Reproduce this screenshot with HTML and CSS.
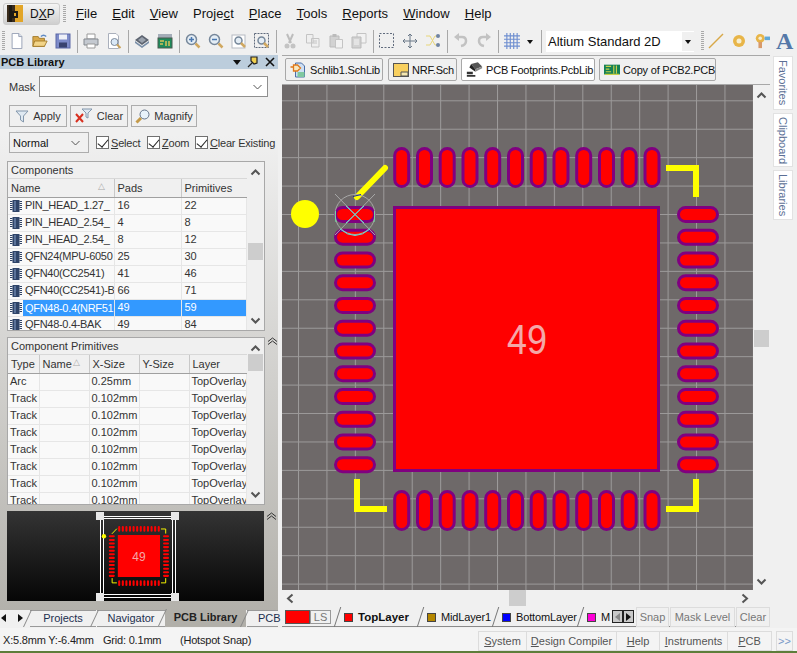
FILE: index.html
```html
<!DOCTYPE html>
<html lang="en">
<head>
    <meta charset="UTF-8">
    <meta name="viewport" content="width=device-width, initial-scale=1.0">
    <title>Altium Designer - PCB Library</title>
    <link rel="stylesheet" href="styles.css">
</head>
<body>
    <!-- shared shapes -->
    <svg class="defs" width="0" height="0">
        <defs>
            <symbol id="chev-up" viewBox="0 0 11 8"><path d="M1.5 6.5 5.5 2.5 9.5 6.5" fill="none" stroke="#555" stroke-width="2"/></symbol>
            <symbol id="chev-down" viewBox="0 0 11 8"><path d="M1.5 1.5 5.5 5.5 9.5 1.5" fill="none" stroke="#555" stroke-width="2"/></symbol>
            <symbol id="chev-fold" viewBox="0 0 11 8"><path d="M1 4.5 5.5 1 10 4.5M1 7.500 5.500 4 10 7.500" fill="none" stroke="#333" stroke-width="1"/></symbol>
            <symbol id="chip" viewBox="0 0 12 12"><rect x="2.500" y="0" width="7" height="12" fill="#2f4468"/><path d="M0 1.500H12M0 3.500H12M0 5.500H12M0 7.500H12M0 9.500H12" stroke="#2f4468" stroke-dasharray="2.500 7 2.500" stroke-width="1"/><rect x="4" y="1" width="2" height="10" fill="#5a7299"/></symbol>
            <path id="pads" fill="none" stroke-linecap="round" d="M401.700 155.500V179.500M424.500 155.500V179.500M447.200 155.500V179.500M470 155.500V179.500M492.700 155.500V179.500M515.500 155.500V179.500M538.200 155.500V179.500M561 155.500V179.500M583.700 155.500V179.500M606.500 155.500V179.500M629.200 155.500V179.500M652 155.500V179.500
                M401.700 498.500V522.500M424.500 498.500V522.500M447.200 498.500V522.500M470 498.500V522.500M492.700 498.500V522.500M515.500 498.500V522.500M538.200 498.500V522.500M561 498.500V522.500M583.700 498.500V522.500M606.500 498.500V522.500M629.200 498.500V522.500M652 498.500V522.500
                M342.500 214.500H367.500M342.500 237.200H367.500M342.500 260H367.500M342.500 282.700H367.500M342.500 305.500H367.500M342.500 328.200H367.500M342.500 351H367.500M342.500 373.700H367.500M342.500 396.500H367.500M342.500 419.200H367.500M342.500 442H367.500M342.500 464.700H367.500
                M685.500 214.500H710.500M685.500 237.200H710.500M685.500 260H710.500M685.500 282.700H710.500M685.500 305.500H710.500M685.500 328.200H710.500M685.500 351H710.500M685.500 373.700H710.500M685.500 396.500H710.500M685.500 419.200H710.500M685.500 442H710.500M685.500 464.700H710.500"/>
            <g id="overlay" fill="none" stroke="#ffff00" stroke-width="6">
                <path d="M357 197 385 168" stroke-linecap="round"/>
                <path d="M666 168H696V197"/>
                <path d="M357 479V509H387"/>
                <path d="M666 509H696V479"/>
                <circle cx="305" cy="214" r="14" fill="#ffff00" stroke="none"/>
            </g>
            <pattern id="grid" x="298" y="100.300" width="28.430" height="28.430" patternUnits="userSpaceOnUse">
                <path d="M.5 0V28.430M0 .5H28.430" stroke="#9c9a9a" stroke-width="1" fill="none"/>
            </pattern>
        </defs>
    </svg>

    <header class="menubar">
        <button class="dxp">
            <svg width="16" height="17" viewBox="0 0 16 17"><rect width="8" height="17" fill="#3a2c1c"/><rect x="8" width="8" height="17" fill="#e2a528"/><path d="M5 0V17H2V0ZM5 6H11V13H5Z" fill="#1e1a14"/><rect x="7" y="8" width="2" height="3" fill="#e2a528"/></svg>
            <span>D<u>X</u>P</span>
        </button>
        <span class="grip"></span>
        <nav class="menu">
            <a><u>F</u>ile</a>
            <a><u>E</u>dit</a>
            <a><u>V</u>iew</a>
            <a>Proje<u>c</u>t</a>
            <a><u>P</u>lace</a>
            <a><u>T</u>ools</a>
            <a><u>R</u>eports</a>
            <a><u>W</u>indow</a>
            <a><u>H</u>elp</a>
        </nav>
    </header>

    <div class="toolbar">
        <span class="grip short"></span>
        <span class="tool"><svg viewBox="0 0 16 18"><path d="M2.500 .5H10L13.500 4V17.500H2.500Z" fill="#fff" stroke="#8f9ab0"/><path d="M10 .5V4H13.500" fill="#dfe4ee" stroke="#8f9ab0"/></svg></span>
        <span class="tool"><svg viewBox="0 0 18 16"><path d="M1 3H7L8 5H14V14H1Z" fill="#d9a94a" stroke="#a07a2a"/><path d="M3 8H17L14 14H1Z" fill="#f2d488" stroke="#a07a2a"/><path d="M10 3Q13 0 16 3" fill="none" stroke="#5f8ac4" stroke-width="1.500"/></svg></span>
        <span class="tool"><svg viewBox="0 0 16 16"><rect x="1" y="1" width="14" height="14" fill="#7d8bc9" stroke="#5a67a5"/><rect x="4" y="1.500" width="8" height="5" fill="#eef0f8"/><rect x="4" y="9.500" width="8" height="5" fill="#39436f"/></svg></span>
        <span class="tsep"></span>
        <span class="tool"><svg viewBox="0 0 16 16"><path d="M4 1H12V6H4Z" fill="#fff" stroke="#9a9a9a"/><path d="M1 6H15V12H1Z" fill="#c4c9d0" stroke="#84898f"/><path d="M4 11H12V15H4Z" fill="#fff" stroke="#9a9a9a"/></svg></span>
        <span class="tool"><svg viewBox="0 0 16 16"><path d="M2.500 .5H10L12.500 3V15.500H2.500Z" fill="#fff" stroke="#aab0bc"/><circle cx="8.500" cy="9" r="3.500" fill="#d9e8f6" stroke="#7d8a9c"/><path d="M11 11.500 14.500 15" stroke="#c9a25a" stroke-width="2"/></svg></span>
        <span class="tsep"></span>
        <span class="tool"><svg viewBox="0 0 16 16"><path d="M8 2 15 7 8 12 1 7Z" fill="#5d6470"/><path d="M8 4 12 7 8 10 4 7Z" fill="#9aa2ad"/><path d="M1 8 8 13 15 8V10L8 15 1 10Z" fill="#7a8fa8"/></svg></span>
        <span class="tool"><svg viewBox="0 0 16 16"><rect x="1" y="1" width="14" height="5" fill="#a4adb8"/><rect x="1" y="5" width="14" height="10" fill="#1f8a5a" stroke="#4a5a50"/><path d="M3 8H7M3 11H6M9 8V13M12 8V13" stroke="#d6c25a" stroke-width="1.500"/></svg></span>
        <span class="tsep"></span>
        <span class="tool"><svg viewBox="0 0 16 16"><circle cx="6.500" cy="6.500" r="5" fill="#e4edf5" stroke="#76879a" stroke-width="1.500"/><path d="M4 6.500H9M6.500 4V9" stroke="#4a78b0" stroke-width="1.500"/><path d="M10.500 10.500 14.500 14.500" stroke="#d0a860" stroke-width="2.500"/></svg></span>
        <span class="tool"><svg viewBox="0 0 16 16"><circle cx="6.500" cy="6.500" r="5" fill="#e4edf5" stroke="#76879a" stroke-width="1.500"/><path d="M4 6.500H9" stroke="#4a78b0" stroke-width="1.500"/><path d="M10.500 10.500 14.500 14.500" stroke="#d0a860" stroke-width="2.500"/></svg></span>
        <span class="tool"><svg viewBox="0 0 16 16"><rect x="1" y="2" width="13" height="13" fill="#fff" stroke="#b5bac2"/><circle cx="7.500" cy="7.500" r="3.500" fill="#e4edf5" stroke="#76879a" stroke-width="1.500"/><path d="M10 10 14 14" stroke="#d0a860" stroke-width="2.500"/></svg></span>
        <span class="tool"><svg viewBox="0 0 16 16"><rect x=".5" y=".5" width="14" height="14" fill="none" stroke="#5f6a7c" stroke-dasharray="2 1"/><circle cx="7.500" cy="7.500" r="3.500" fill="#e4edf5" stroke="#76879a" stroke-width="1.500"/><path d="M10 10 14 14" stroke="#d0a860" stroke-width="2.500"/></svg></span>
        <span class="tsep"></span>
        <span class="tool"><svg viewBox="0 0 16 16"><path d="M5 1 9 10M11 1 7 10" stroke="#bdbdbd" stroke-width="2"/><circle cx="5" cy="13" r="2.500" fill="#c4c4c4"/><circle cx="11" cy="13" r="2.500" fill="#c4c4c4"/></svg></span>
        <span class="tool"><svg viewBox="0 0 16 16"><path d="M1.500 1.500H8V10H1.500ZM6.500 5.500H14V14H6.500Z" fill="#efefef" stroke="#c4c4c4"/><path d="M8 8H12M8 10H12" stroke="#c4c4c4"/></svg></span>
        <span class="tool"><svg viewBox="0 0 16 16"><path d="M2 3H11V14H2Z" fill="#d2d2d2" stroke="#bbb"/><rect x="4.500" y="1" width="4" height="3" fill="#bbb"/><path d="M7.500 6.500H14.500V15H7.500Z" fill="#f2f2f2" stroke="#c4c4c4"/></svg></span>
        <span class="tool"><svg viewBox="0 0 16 16"><path d="M6 .5H15V10H6Z" fill="#f2f2f2" stroke="#c4c4c4"/><path d="M1 4H10V15H1Z" fill="#d2d2d2" stroke="#bbb"/><path d="M3 7H8M3 9H8M3 11H8" stroke="#f5f5f5"/></svg></span>
        <span class="tsep"></span>
        <span class="tool"><svg viewBox="0 0 16 16"><rect x=".5" y=".5" width="14" height="14" fill="none" stroke="#5f6a7c" stroke-dasharray="2 1.500"/></svg></span>
        <span class="tool"><svg viewBox="0 0 16 16"><path d="M8 1V15M1 8H15M6 3 8 1 10 3M6 13 8 15 10 13M3 6 1 8 3 10M13 6 15 8 13 10" fill="none" stroke="#6a7888"/></svg></span>
        <span class="tool"><svg viewBox="0 0 16 16"><path d="M1 3H5L10 12H14M1 12H5L10 3H14" fill="none" stroke="#e8d67a"/><circle cx="13" cy="3" r="2" fill="#6f84a3"/><circle cx="13" cy="12" r="2" fill="#6f84a3"/></svg></span>
        <span class="tsep"></span>
        <span class="tool"><svg viewBox="0 0 16 16"><path d="M3 4H9Q13 4 13 8T8 13" fill="none" stroke="#c2c2c2" stroke-width="2.500"/><path d="M1 4 6 0V8Z" fill="#c2c2c2"/></svg></span>
        <span class="tool"><svg viewBox="0 0 16 16"><path d="M13 4H7Q3 4 3 8T8 13" fill="none" stroke="#c2c2c2" stroke-width="2.500"/><path d="M15 4 10 0V8Z" fill="#c2c2c2"/></svg></span>
        <span class="tsep"></span>
        <span class="tool"><svg viewBox="0 0 14 14"><path d="M0 2.500H14M0 5.500H14M0 8.500H14M0 11.500H14M2.500 0V14M5.500 0V14M8.500 0V14M11.500 0V14" stroke="#6f8fd0"/></svg></span>
        <span class="tool-arrow"></span>
        <span class="tsep"></span>
        <div class="combo">
            <span>Altium Standard 2D</span>
            <span class="combo-arrow"></span>
        </div>
        <span class="grip short"></span>
        <span class="tool"><svg viewBox="0 0 16 16"><path d="M1 15 15 1" stroke="#d8a848" stroke-width="1.500"/></svg></span>
        <span class="tool"><svg viewBox="0 0 16 16"><circle cx="8" cy="8" r="6" fill="#e8b548"/><circle cx="8" cy="8" r="2.500" fill="#f6eed0"/></svg></span>
        <span class="tool"><svg viewBox="0 0 18 18"><circle cx="7" cy="6" r="5" fill="#e8b548"/><circle cx="7" cy="6" r="2" fill="#f6eed0"/><rect x="5" y="10" width="4" height="7" fill="#d89a6a"/><rect x="12" y="4" width="6" height="4" fill="#5fa8d8"/></svg></span>
        <span class="big-a">A</span>
    </div>

    <main class="workspace">
        <section class="panel">
            <div class="panel-title">
                <span>PCB Library</span>
                <span class="panel-icons">
                    <span class="down-tri"></span>
                    <svg width="12" height="12" viewBox="0 0 12 12"><path d="M4 1H10V7L7 8 4 5ZM5 7 1 11" fill="#f0d050" stroke="#222" stroke-width="1.200"/></svg>
                    <svg width="10" height="10" viewBox="0 0 10 10"><path d="M1 1 9 9M9 1 1 9" stroke="#111" stroke-width="1.600"/></svg>
                </span>
            </div>

            <div class="mask-row">
                <label>Mask</label>
                <div class="mask-input"><svg width="9" height="6" viewBox="0 0 9 6"><path d="M.5 1 4.500 5 8.500 1" fill="none" stroke="#555"/></svg></div>
            </div>

            <div class="btn-row">
                <button class="btn b-apply"><svg width="14" height="14" viewBox="0 0 14 14"><path d="M1 2H13L8.500 7V13L5.500 11V7Z" fill="#dfe9f2" stroke="#8397ac"/></svg>Apply</button>
                <button class="btn b-clear"><svg width="18" height="16" viewBox="0 0 18 16"><path d="M7 1H17L13 5V10L11 9V5Z" fill="#dfe9f2" stroke="#8397ac"/><path d="M1 6 8 14M8 6 1 14" stroke="#d83020" stroke-width="2"/></svg>Clear</button>
                <button class="btn b-magnify"><svg width="15" height="15" viewBox="0 0 15 15"><circle cx="9.500" cy="5.500" r="4.500" fill="#e8f2fa" stroke="#64748a"/><path d="M6 9 1.500 13.500" stroke="#c49a4a" stroke-width="3"/></svg>Magnify</button>
            </div>

            <div class="select-row">
                <div class="select">Normal<svg width="9" height="6" viewBox="0 0 9 6"><path d="M.5 1 4.500 5 8.500 1" fill="none" stroke="#555"/></svg></div>
                <label class="check c-select"><span class="box"></span><span><u>S</u>elect</span></label>
                <label class="check c-zoom"><span class="box"></span><span><u>Z</u>oom</span></label>
                <label class="check"><span class="box"></span><span><u>C</u>lear Existing</span></label>
            </div>

            <div class="sect sect-comp">
                <div class="grid-box">
                    <div class="grid-main">
                        <div class="grid-title">Components</div>
                        <table class="comp-table">
                            <thead>
                                <tr><th class="c-name">Name<i class="sort">&#9651;</i></th><th class="c-pads">Pads</th><th>Primitives</th></tr>
                            </thead>
                            <tbody>
                                <tr><td><div class="nm"><svg class="chip"><use href="#chip"/></svg><span>PIN_HEAD_1.27_</span></div></td><td>16</td><td>22</td></tr>
                                <tr><td><div class="nm"><svg class="chip"><use href="#chip"/></svg><span>PIN_HEAD_2.54_</span></div></td><td>4</td><td>8</td></tr>
                                <tr><td><div class="nm"><svg class="chip"><use href="#chip"/></svg><span>PIN_HEAD_2.54_</span></div></td><td>8</td><td>12</td></tr>
                                <tr><td><div class="nm"><svg class="chip"><use href="#chip"/></svg><span>QFN24(MPU-6050</span></div></td><td>25</td><td>30</td></tr>
                                <tr><td><div class="nm"><svg class="chip"><use href="#chip"/></svg><span>QFN40(CC2541)</span></div></td><td>41</td><td>46</td></tr>
                                <tr><td><div class="nm"><svg class="chip"><use href="#chip"/></svg><span>QFN40(CC2541)-B</span></div></td><td>66</td><td>71</td></tr>
                                <tr class="selected"><td><div class="nm"><svg class="chip"><use href="#chip"/></svg><span>QFN48-0.4(NRF51</span></div></td><td>49</td><td>59</td></tr>
                                <tr><td><div class="nm"><svg class="chip"><use href="#chip"/></svg><span>QFN48-0.4-BAK</span></div></td><td>49</td><td>84</td></tr>
                            </tbody>
                        </table>
                    </div>
                    <div class="vscroll">
                        <svg class="chev"><use href="#chev-up"/></svg>
                        <span class="thumb thumb-comp"></span>
                        <svg class="chev"><use href="#chev-down"/></svg>
                    </div>
                </div>
            </div>

            <div class="sect sect-prim">
                <div class="grid-box">
                    <div class="grid-main">
                        <div class="grid-title">Component Primitives</div>
                        <table class="prim-table">
                            <thead>
                                <tr><th class="p-type">Type</th><th class="p-name">Name<i class="sort">&#9651;</i></th><th class="p-size">X-Size</th><th class="p-size">Y-Size</th><th>Layer</th></tr>
                            </thead>
                            <tbody>
                                <tr><td>Arc</td><td></td><td>0.25mm</td><td></td><td>TopOverlay</td></tr>
                                <tr><td>Track</td><td></td><td>0.102mm</td><td></td><td>TopOverlay</td></tr>
                                <tr><td>Track</td><td></td><td>0.102mm</td><td></td><td>TopOverlay</td></tr>
                                <tr><td>Track</td><td></td><td>0.102mm</td><td></td><td>TopOverlay</td></tr>
                                <tr><td>Track</td><td></td><td>0.102mm</td><td></td><td>TopOverlay</td></tr>
                                <tr><td>Track</td><td></td><td>0.102mm</td><td></td><td>TopOverlay</td></tr>
                                <tr><td>Track</td><td></td><td>0.102mm</td><td></td><td>TopOverlay</td></tr>
                                <tr><td>Track</td><td></td><td>0.102mm</td><td></td><td>TopOverlay</td></tr>
                            </tbody>
                        </table>
                    </div>
                    <div class="vscroll">
                        <svg class="chev"><use href="#chev-up"/></svg>
                        <span class="thumb thumb-prim"></span>
                        <svg class="chev"><use href="#chev-down"/></svg>
                    </div>
                </div>
                <svg class="fold"><use href="#chev-fold"/></svg>
            </div>

            <div class="sect sect-preview">
                <svg class="preview" viewBox="7 511 257 90" width="257" height="90">
                    <defs>
                        <linearGradient id="prev-bg" x1="0" y1="0" x2="0" y2="1"><stop offset="0" stop-color="#343434"/><stop offset="1" stop-color="#060606"/></linearGradient>
                    </defs>
                    <rect x="7" y="511" width="257" height="90" fill="url(#prev-bg)"/>
                    <path d="M100.500 516V598M103.500 516V598M172.500 516V598M175.500 516V598M100 516.500H176M100 518.500H176M100 594.500H176M100 597.500H176" stroke="#fff" fill="none"/>
                    <path d="M96 512h8v8h-8zM171 512h8v8h-8zM96 593h8v8h-8zM171 593h8v8h-8z" fill="#e8e8e8"/>
                    <g transform="translate(139 556) scale(.158) translate(-527 -339)">
                        <use href="#pads" stroke="#ff0000" stroke-width="13"/>
                        <rect x="393" y="206" width="267" height="266" fill="#ff0000"/>
                        <use href="#overlay"/>
                    </g>
                    <text x="139" y="561" class="mini-label">49</text>
                </svg>
                <svg class="fold"><use href="#chev-fold"/></svg>
            </div>

            <div class="panel-tabs">
                <span class="nav-tri left"></span>
                <span class="nav-tri right"></span>
                <span class="ptab t-projects">Projects</span>
                <span class="ptab t-nav">Navigator</span>
                <span class="ptab t-lib">PCB Library</span>
                <span class="ptab t-pcb">PCB</span>
            </div>
        </section>

        <section class="documents">
            <div class="doc-tabs">
                <span class="doc-tab t-schlib"><svg width="17" height="16" viewBox="0 0 16 16"><path d="M5 1H11L14 4V15H5Z" fill="#cfe0f4" stroke="#4a6ea8"/><rect x="7" y="10" width="7" height="5" fill="#7fc8a0"/><path d="M0 5H3M3 3H7L10 6 7 9H3Z" fill="#f8e8c0" stroke="#e07818" stroke-width="1.300"/></svg>Schlib1.SchLib</span>
                <span class="doc-tab t-nrf"><svg width="16" height="14" viewBox="0 0 16 14"><rect x=".5" y=".5" width="15" height="13" fill="#f8d060" stroke="#555"/><path d="M8 9H15V13H8Z" fill="#f6e8b0" stroke="#555"/></svg>NRF.Sch</span>
                <span class="doc-tab t-foot active"><svg width="17" height="16" viewBox="0 0 20 18"><path d="M6 2 14 0 19 5 11 8Z" fill="#555"/><path d="M6 2 11 8V11L4 6Z" fill="#222"/><path d="M11 8 19 5V7L11 11Z" fill="#888"/><path d="M1 11H8V14H1ZM1 15H11V17H1Z" fill="#333"/></svg>PCB Footprints.PcbLib</span>
                <span class="doc-tab t-copy"><svg width="16" height="14" viewBox="0 0 18 14"><rect width="18" height="11" y="1" fill="#138055"/><path d="M2 3H8M2 6H6M2 9H8M11 2V11M14 2V11M1 12H17" stroke="#c8d048" stroke-width="1.300"/></svg>Copy of PCB2.PCB</span>
            </div>

            <div class="canvas-row">
                <svg class="board" viewBox="282 85 471 505" width="471" height="505">
                    <rect x="282" y="85" width="471" height="505" fill="#6e6969"/>
                    <rect x="282" y="85" width="471" height="505" fill="url(#grid)"/>
                    <use href="#pads" stroke="#800080" stroke-width="17"/>
                    <use href="#pads" stroke="#ff0000" stroke-width="11"/>
                    <rect x="394.500" y="207.500" width="264" height="263" fill="#ff0000" stroke="#800080" stroke-width="3"/>
                    <text x="527" y="354" class="pad-label" textLength="40" lengthAdjust="spacingAndGlyphs">49</text>
                    <use href="#overlay"/>
                    <!-- snap cross on pad 1 -->
                    <circle cx="355" cy="214.500" r="20" fill="none" stroke="#a8a8a8"/>
                    <path d="M335 194 375 235M375 194 335 235" stroke="#a8a8a8"/>
                    <path d="M346 206 364 223M364 206 346 223" stroke="#5fe0d8"/>
                    <path d="M335.500 211Q335 215 336 222M374.500 211Q375 215 374 222" fill="none" stroke="#70e0a0"/>
                    <path d="M340 229Q355 242 370 229" fill="none" stroke="#5fe0d8"/>
                    <path d="M353 196.500 361 194.500" stroke="#1428a0"/>
                </svg>
                <div class="canvas-vscroll">
                    <svg class="chev"><use href="#chev-up"/></svg>
                    <span class="thumb thumb-canvas"></span>
                    <svg class="chev"><use href="#chev-down"/></svg>
                </div>
            </div>

            <div class="canvas-hscroll">
                <svg class="chev-h" viewBox="0 0 8 11" width="8" height="11"><path d="M6.500 1.500 2 5.500 6.500 9.500" fill="none" stroke="#555" stroke-width="2"/></svg>
                <span class="thumb thumb-h"></span>
                <svg class="chev-h" viewBox="0 0 8 11" width="8" height="11"><path d="M1.500 1.500 6 5.500 1.500 9.500" fill="none" stroke="#555" stroke-width="2"/></svg>
            </div>

            <div class="layer-bar">
                <span class="ls-swatch"></span>
                <span class="ls-box">LS</span>
                <span class="ltab l-top"><i class="sw red"></i>TopLayer</span>
                <span class="ltab l-mid"><i class="sw brown"></i>MidLayer1</span>
                <span class="ltab l-bot"><i class="sw blue"></i>BottomLayer</span>
                <span class="ltab l-mech"><i class="sw pink"></i>M</span>
                <span class="lnav n-prev"><i class="tri-l"></i></span>
                <span class="lnav n-next"><i class="tri-r"></i></span>
                <span class="lbtn b-snap">Snap</span>
                <span class="lbtn b-mask">Mask Level</span>
                <span class="lbtn b-clr">Clear</span>
            </div>
        </section>

        <aside class="dock">
            <span class="dock-tab d-fav">Favorites</span>
            <span class="dock-tab d-clip">Clipboard</span>
            <span class="dock-tab d-lib">Libraries</span>
        </aside>
    </main>

    <footer class="statusbar">
        <span class="st st-pos">X:5.8mm Y:-6.4mm</span>
        <span class="st st-grid">Grid: 0.1mm</span>
        <span class="st st-snap">(Hotspot Snap)</span>
        <div class="st-btns">
            <span class="sbtn s-sys"><u>S</u>ystem</span>
            <span class="sbtn s-dc"><u>D</u>esign Compiler</span>
            <span class="sbtn s-help"><u>H</u>elp</span>
            <span class="sbtn s-ins"><u>I</u>nstruments</span>
            <span class="sbtn s-pcb"><u>P</u>CB</span>
            <span class="sbtn s-more">&gt;&gt;</span>
        </div>
    </footer>
</body>
</html>
```

FILE: styles.css
```css
* {
    box-sizing: border-box;
}
html, body {
    margin: 0;
    height: 100%;
}
body {
    width: 797px;
    height: 653px;
    overflow: hidden;
    display: flex;
    flex-direction: column;
    background: #f0f0f0;
    font-family: "Liberation Sans", Arial, sans-serif;
    font-size: 11px;
    color: #111;
}
.defs {
    position: absolute;
}
button {
    font: inherit;
    color: inherit;
}

/* menu */
.menubar {
    height: 27px;
    flex: none;
    display: flex;
    align-items: center;
    padding-left: 3px;
}
.dxp {
    width: 57px;
    height: 22px;
    display: flex;
    align-items: center;
    gap: 7px;
    padding: 0 0 0 3px;
    background: linear-gradient(#f4f4f4, #cfcfcf);
    border: 1px solid #cdcdcd;
    border-radius: 3px;
    font-size: 12px;
}
.dxp svg {
    flex: none;
}
.grip {
    width: 3px;
    height: 17px;
    margin-left: 3px;
    flex: none;
    background: repeating-linear-gradient(#a9a9a9 0 1px, #f0f0f0 1px 2px);
}
.grip.short {
    height: 20px;
    margin-left: 2px;
}
.menu {
    display: flex;
    gap: 15px;
    margin-left: 10px;
    font-size: 13px;
    letter-spacing: .05px;
}

/* toolbar */
.toolbar {
    height: 28px;
    flex: none;
    display: flex;
    align-items: center;
}
.tool {
    width: 23px;
    height: 22px;
    flex: none;
    display: flex;
    align-items: center;
    justify-content: center;
}
.tool svg {
    width: 16px;
    height: 16px;
}
.tool-arrow {
    width: 15px;
    height: 3px;
    flex: none;
    position: relative;
}
.tool-arrow::after, .combo-arrow::after {
    content: "";
    position: absolute;
    left: 4px;
    top: 0;
    border: 3px solid transparent;
    border-top: 4px solid #111;
    border-bottom: 0;
}
.tsep {
    width: 1px;
    height: 23px;
    flex: none;
    margin: 0 1px 0 3px;
    background: #a8a8a8;
}
.combo {
    width: 148px;
    height: 21px;
    margin: 0 5px 0 3px;
    flex: none;
    display: flex;
    align-items: center;
    justify-content: space-between;
    padding-left: 2px;
    background: #fff;
    font-size: 13px;
}
.combo-arrow {
    width: 12px;
    height: 19px;
    position: relative;
    background: #f0f0f0;
}
.combo-arrow::after {
    left: 3px;
    top: 8px;
}
.big-a {
    margin-left: 3px;
    font-family: "Liberation Serif", serif;
    font-weight: bold;
    font-size: 24px;
    line-height: 24px;
    color: #5578a8;
}

/* main area */
.workspace {
    flex: 1;
    display: flex;
    min-height: 0;
}
.panel {
    width: 278px;
    flex: none;
    display: flex;
    flex-direction: column;
    background: linear-gradient(#f0f0f0 0, #f0f0f0 80px, #b1afa9 100%);
}
.panel-title {
    height: 14px;
    flex: none;
    display: flex;
    align-items: center;
    justify-content: space-between;
    padding: 0 3px 0 1px;
    background: #bccddc;
    font-weight: bold;
    line-height: 14px;
}
.panel-icons {
    display: flex;
    align-items: center;
    gap: 6px;
}
.down-tri {
    border: 4px solid transparent;
    border-top: 5px solid #111;
    border-bottom: 0;
}
.mask-row {
    height: 21px;
    margin-top: 7px;
    flex: none;
    display: flex;
    align-items: center;
    padding-left: 9px;
}
.mask-row label {
    width: 30px;
    flex: none;
    color: #333;
}
.mask-input {
    width: 229px;
    height: 21px;
    display: flex;
    align-items: center;
    justify-content: flex-end;
    padding-right: 5px;
    background: #fff;
    border: 1px solid #8f8f8f;
}
.btn-row {
    height: 22px;
    margin-top: 8px;
    flex: none;
    display: flex;
    gap: 3px;
    padding-left: 9px;
}
.btn {
    height: 22px;
    padding: 0;
    display: flex;
    align-items: center;
    justify-content: center;
    gap: 4px;
    background: #f0f0f0;
    border: 1px solid #adadad;
    color: #333;
}
.btn svg {
    flex: none;
}
.b-apply {
    width: 58px;
}
.b-clear {
    width: 58px;
}
.b-magnify {
    width: 66px;
}
.select-row {
    height: 21px;
    margin-top: 5px;
    flex: none;
    display: flex;
    align-items: center;
    padding-left: 9px;
    white-space: nowrap;
}
.select {
    width: 80px;
    height: 21px;
    margin-right: 7px;
    flex: none;
    display: flex;
    align-items: center;
    justify-content: space-between;
    padding: 0 8px 0 3px;
    border: 1px solid #adadad;
    background: #f0f0f0;
}
.check {
    display: flex;
    align-items: center;
    gap: 2px;
    flex: none;
    color: #333;
    letter-spacing: -.2px;
}
.c-select {
    width: 51px;
}
.c-zoom {
    width: 48px;
}
.box {
    width: 13px;
    height: 13px;
    flex: none;
    position: relative;
    background: #fff;
    border: 1px solid #707070;
}
.box::after {
    content: "";
    position: absolute;
    left: 3px;
    top: 0;
    width: 5px;
    height: 9px;
    border: solid #222;
    border-width: 0 1.5px 1.5px 0;
    transform: rotate(40deg);
}

/* grids */
.sect {
    flex: none;
    display: flex;
    padding-left: 7px;
}
.sect-comp {
    margin-top: 8px;
    height: 170px;
}
.sect-prim {
    margin-top: 6px;
    height: 168px;
}
.sect-prim .fold {
    margin-top: 0;
}
.sect-preview {
    margin-top: 6px;
    height: 90px;
}
.grid-box {
    width: 258px;
    flex: none;
    display: flex;
    background: #f0f0f0;
    border: 1px solid #a8a8a8;
    overflow: hidden;
}
.grid-main {
    width: 239px;
    flex: none;
    overflow: hidden;
}
.grid-title {
    height: 17px;
    line-height: 16px;
    padding-left: 3px;
    background: #f0f0f0;
    border-bottom: 1px solid #d8d8d8;
    color: #333;
}
table {
    width: 239px;
    border-collapse: collapse;
    table-layout: fixed;
}
th {
    height: 18px;
    padding: 0 0 0 3px;
    font-weight: normal;
    text-align: left;
    background: #f0f0f0;
    border-bottom: 1px solid #a0a0a0;
    border-right: 1px solid #c8c8c8;
    position: relative;
    color: #333;
}
th:last-child {
    border-right: 0;
}
td {
    height: 17px;
    padding: 0 0 1px 3px;
    background: #f9f9f9;
    border-bottom: 1px solid #e6e6e6;
    border-right: 1px solid #e6e6e6;
    white-space: nowrap;
    overflow: hidden;
    color: #333;
}
.comp-table td:first-child {
    padding: 0;
}
.sort {
    position: absolute;
    right: 9px;
    top: 2px;
    font-style: normal;
    font-size: 9px;
    color: #aaa;
}
.c-name {
    width: 106px;
}
.c-pads {
    width: 67px;
}
.nm {
    display: flex;
    align-items: center;
    height: 16px;
}
.chip {
    width: 12px;
    height: 12px;
    margin: 0 1px 0 2px;
    flex: none;
}
.nm span {
    flex: 1;
    min-width: 0;
    padding-left: 2px;
    line-height: 15px;
    overflow: hidden;
    letter-spacing: -.3px;
}
.selected td {
    background: #3399ff;
    color: #fff;
}
.selected td:first-child {
    background: #f9f9f9;
}
.selected .nm span {
    background: #3399ff;
    color: #fff;
    line-height: 16px;
}
.p-type {
    width: 31px;
}
.p-name {
    width: 50px;
}
.p-size {
    width: 50px;
}
.prim-table td {
    padding-left: 2px;
}
.vscroll {
    flex: 1;
    position: relative;
    background: #f0f0f0;
}
.vscroll .chev {
    position: absolute;
    left: 3px;
    width: 11px;
    height: 8px;
}
.vscroll .chev:first-child {
    top: 6px;
}
.vscroll .chev:last-child {
    bottom: 5px;
}
.thumb {
    position: absolute;
    background: #cdcdcd;
}
.vscroll .thumb {
    left: 1px;
    width: 15px;
    height: 17px;
}
.thumb-comp {
    top: 81px;
}
.thumb-prim {
    top: 16px;
}
.fold {
    width: 11px;
    height: 8px;
    margin: 1px 0 0 2px;
    flex: none;
}
.preview {
    flex: none;
    display: block;
}
.pad-label, .mini-label {
    text-anchor: middle;
    font-family: "Liberation Sans", Arial, sans-serif;
    fill: #f4a8a8;
}
.pad-label {
    font-size: 42px;
}
.mini-label {
    font-size: 12px;
}

/* left tabs */
.panel-tabs {
    flex: 1;
    position: relative;
}
.panel-tabs::before {
    content: "";
    position: absolute;
    left: 0;
    right: 0;
    top: 9px;
    bottom: 0;
    background: #f0f0f0;
}
.nav-tri {
    position: absolute;
    top: 13px;
    border: 4px solid transparent;
}
.nav-tri.left {
    left: 1px;
    border-right: 5px solid #111;
    border-left: 0;
}
.nav-tri.right {
    left: 18px;
    border-left: 5px solid #111;
    border-right: 0;
}
.ptab {
    position: absolute;
    top: 9px;
    height: 17px;
    line-height: 14px;
    text-align: center;
    color: #1c2f4f;
}
.ptab::before {
    content: "";
    position: absolute;
    left: -3px;
    top: -1px;
    height: 17px;
    border-left: 1px solid #888;
    transform: skewX(-25deg);
}
.t-projects {
    left: 30px;
    width: 66px;
    border-top: 1px solid #999;
    border-bottom: 1px solid #999;
    background: #f0f0f0;
}
.t-nav {
    left: 97px;
    width: 68px;
    border-top: 1px solid #999;
    border-bottom: 1px solid #999;
    background: #f0f0f0;
}
.t-lib {
    left: 165px;
    width: 81px;
    font-weight: bold;
    color: #222;
    background: #b1afa9;
}
.t-pcb {
    left: 247px;
    width: 31px;
    border-top: 1px solid #999;
    border-bottom: 1px solid #999;
    background: #f0f0f0;
    text-align: left;
    padding-left: 11px;
}

/* documents */
.documents {
    width: 488px;
    margin-left: 4px;
    flex: none;
    display: flex;
    flex-direction: column;
    border-top: 1px solid #a8a8a8;
}
.doc-tabs {
    height: 29px;
    flex: none;
    position: relative;
    border-bottom: 1px solid #a8a8a8;
}
.doc-tab {
    position: absolute;
    top: 2px;
    height: 23px;
    display: flex;
    align-items: center;
    gap: 3px;
    padding-left: 4px;
    border: 1px solid #a8a8a8;
    border-radius: 2px;
    white-space: nowrap;
    letter-spacing: -.2px;
}
.doc-tab svg {
    flex: none;
}
.t-schlib {
    left: 3px;
    width: 98px;
}
.t-nrf {
    left: 106px;
    width: 69px;
}
.t-foot {
    left: 179px;
    width: 134px;
    background: #fff;
}
.t-copy {
    left: 317px;
    width: 117px;
}
.canvas-row {
    height: 505px;
    flex: none;
    display: flex;
}
.board {
    flex: none;
    display: block;
}
.canvas-vscroll {
    flex: 1;
    position: relative;
}
.canvas-vscroll .chev {
    position: absolute;
    left: 3px;
    width: 11px;
    height: 8px;
}
.canvas-vscroll .chev:first-child {
    top: 6px;
}
.canvas-vscroll .chev:last-child {
    bottom: 4px;
}
.thumb-canvas {
    left: 1px;
    top: 245px;
    width: 15px;
    height: 17px;
}
.canvas-hscroll {
    width: 471px;
    height: 16px;
    flex: none;
    position: relative;
    display: flex;
    align-items: center;
    justify-content: space-between;
    padding: 0 4px;
}
.thumb-h {
    left: 227px;
    top: 0;
    width: 17px;
    height: 16px;
}

/* layer tabs */
.layer-bar {
    height: 21px;
    flex: none;
    position: relative;
    border-bottom: 1px solid #8a8a8a;
    white-space: nowrap;
}
.layer-bar > * {
    position: absolute;
}
.ls-swatch {
    left: 3px;
    top: 4px;
    width: 25px;
    height: 14px;
    background: #ff0000;
    border: 1px solid #555;
}
.ls-box {
    left: 28px;
    top: 4px;
    width: 21px;
    height: 14px;
    line-height: 13px;
    text-align: center;
    border: 1px solid #999;
    color: #777;
}
.ltab {
    top: 1px;
    height: 20px;
    line-height: 19px;
    display: flex;
    align-items: center;
    gap: 5px;
    letter-spacing: -.15px;
}
.ltab::before {
    content: "";
    position: absolute;
    left: -7px;
    top: 0;
    height: 20px;
    border-left: 1px solid #777;
    transform: skewX(-18deg);
}
.sw {
    width: 9px;
    height: 9px;
    flex: none;
    border: 1px solid #444;
}
.sw.red {
    background: #ff0000;
}
.sw.brown {
    background: #b58700;
}
.sw.blue {
    background: #0000ff;
}
.sw.pink {
    background: #ff00d8;
}
.l-top {
    left: 62px;
    font-weight: bold;
    font-size: 11.5px;
    letter-spacing: 0;
}
.l-mid {
    left: 145px;
}
.l-bot {
    left: 220px;
}
.l-mech {
    left: 305px;
}
.lnav {
    top: 4px;
    width: 11px;
    height: 13px;
    background: #c8c8c8;
    border: 1px solid #222;
}
.n-prev {
    left: 330px;
}
.n-next {
    left: 341px;
}
.tri-l, .tri-r {
    position: absolute;
    top: 2px;
    left: 2px;
    border: 4px solid transparent;
    border-left-width: 0;
    border-right: 5px solid #888;
}
.tri-r {
    border-right-width: 0;
    border-left: 5px solid #111;
}
.lbtn {
    top: 1px;
    height: 20px;
    line-height: 19px;
    text-align: center;
    border: 1px solid #dcdcdc;
    color: #777;
}
.b-snap {
    left: 354px;
    width: 33px;
}
.b-mask {
    left: 388px;
    width: 65px;
}
.b-clr {
    left: 454px;
    width: 34px;
}

/* right dock */
.dock {
    flex: 1;
    display: flex;
    flex-direction: column;
    gap: 3px;
    padding: 1px 4px 0 3px;
}
.dock-tab {
    width: 20px;
    writing-mode: vertical-rl;
    background: #fff;
    border: 1px solid #e2e2e2;
    line-height: 18px;
    padding-top: 3px;
    color: #5b6f95;
}
.d-fav {
    height: 54px;
}
.d-clip {
    height: 54px;
}
.d-lib {
    height: 50px;
}

/* status bar */
.statusbar {
    height: 25px;
    flex: none;
    position: relative;
    background: #f4f4f4;
    border-bottom: 2px solid #5e7d3a;
    color: #222;
}
.st {
    position: absolute;
    top: 5px;
    line-height: 14px;
    white-space: nowrap;
    letter-spacing: -.2px;
}
.st-pos {
    left: 3px;
}
.st-grid {
    left: 103px;
}
.st-snap {
    left: 180px;
}
.st-btns {
    position: absolute;
    left: 478px;
    top: 3px;
    display: flex;
}
.sbtn {
    height: 20px;
    line-height: 18px;
    text-align: center;
    border: 1px solid #dcdcdc;
    border-left-width: 0;
    color: #555;
    white-space: nowrap;
}
.s-sys {
    width: 49px;
    border-left-width: 1px;
}
.s-dc {
    width: 90px;
}
.s-help {
    width: 43px;
}
.s-ins {
    width: 68px;
}
.s-pcb {
    width: 44px;
}
.s-more {
    width: 17px;
    margin-left: 4px;
    border-left-width: 1px;
    color: #7a9ac8;
}
```
